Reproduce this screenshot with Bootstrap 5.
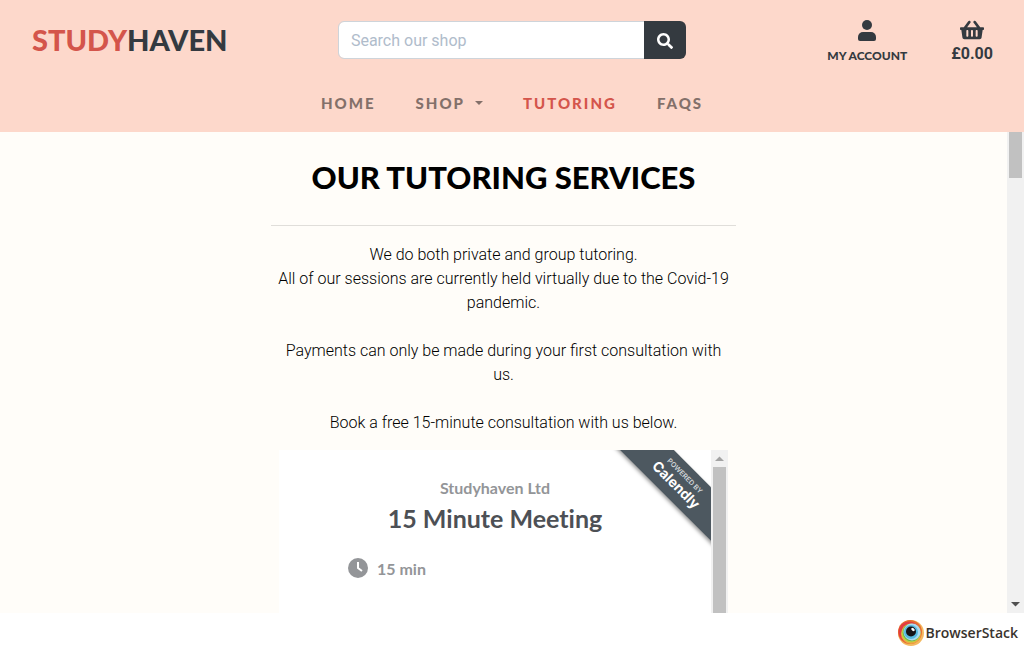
<!DOCTYPE html>
<html lang="en">
<head>
<meta charset="utf-8">
<meta name="viewport" content="width=device-width, initial-scale=1">
<title>Studyhaven - Tutoring</title>
<link href="https://cdn.jsdelivr.net/npm/bootstrap@5.3.0/dist/css/bootstrap.min.css" rel="stylesheet">
<style>
  :root { --peach: #fdd8cb; --ink: #343a40; --coral: #d4554b; --cream: #fffdf9; }
  body { font-family: Roboto, "Liberation Sans", sans-serif; font-weight: 300; color: #000; background: #fff; }
  .display-face { font-family: Lato, "Liberation Sans", sans-serif; text-transform: uppercase; }
  .site-header { background: var(--peach); }
  .header-top { padding-top: 20px; }
  .header-side { flex: 0 0 33%; }
  .header-search { flex: 0 0 34%; width: 34%; padding-top: 1px; }
  .brand { font-size: 29px; font-weight: 900; line-height: 40px; color: var(--ink); }
  .brand span, .site-nav a.active { color: var(--coral); }
  .search-box { color: #000; border-color: #ced4da; font-weight: 400; height: 38px; }
  .search-box::placeholder { color: #b0bccb; }
  .search-btn { background: var(--ink); color: #fff; width: 42px; padding: 0; border: 0; }
  .account-link { color: var(--ink); font-size: 12px; font-weight: 900; line-height: 16px; margin-right: 44px; }
  .account-link svg { margin-bottom: 7px; }
  .basket-link { color: var(--ink); font-size: 16px; font-weight: 700; line-height: 26px; margin-right: 31px; }
  .basket-link svg { margin-top: -1px; }
  .site-nav { gap: 40px; padding: 24px 0 17px; font-size: 15px; font-weight: 900; letter-spacing: 2px; line-height: 24px; }
  .site-nav a { color: #83706a; }
  .site-nav .dropdown-toggle::after { margin-left: 10px; vertical-align: 4px; }
  .page-body { background: var(--cream); min-height: 0; }
  .page-column { max-width: 465px; }
  .page-title { font-size: 31px; font-weight: 900; line-height: 42px; margin-bottom: 27px; }
  .page-column hr { color: #000; opacity: .12; margin: 0 0 17px; }
  .page-column p { margin-bottom: 15px; }
  .bar { width: 17px; background: #f1f1f1; flex: none; }
  .thumb { width: 13px; background: #c1c1c1; }
  .page-bar .thumb { height: 46px; }
  .booking { background: #fff; font-family: Lato, "Liberation Sans", sans-serif; height: 600px; font-variant-ligatures: none; }
  .booking-host { font-size: 16px; line-height: 20px; font-weight: 700; color: #939598; }
  .booking-title { font-size: 25px; line-height: 32px; font-weight: 700; color: #4d5055; }
  .ribbon-clip { position: absolute; top: 0; right: 0; width: 110px; height: 110px; overflow: hidden; }
  .ribbon { position: absolute; top: 13px; right: -58px; width: 180px; height: 38px; transform: rotate(45deg);
    background: #4d5860; color: #fff; box-shadow: 0 2px 4px rgba(0,0,0,.4); font-family: Inter, sans-serif; }
  .ribbon small { font-size: 7px; line-height: 8px; color: #d0d4d7; font-weight: 600; }
  .ribbon strong { font-size: 14px; line-height: 16px; font-weight: 700; }
  .stack-bar { padding: 6px; }
  .stack-bar svg { margin-right: 2px; }
  .stack-name { font-family: "Open Sans", sans-serif; font-size: 14px; font-weight: 600; line-height: 27px; color: #39332d; }
</style>
</head>
<body class="vh-100 d-flex flex-column overflow-hidden">
<header class="site-header">
  <div class="header-top d-flex align-items-start">
    <div class="header-side px-4">
      <a href="#" class="brand display-face text-decoration-none d-inline-block ms-2"><span>Study</span>haven</a>
    </div>
    <form class="header-search input-group">
      <input type="search" class="form-control search-box" placeholder="Search our shop" aria-label="Search our shop">
      <button type="button" class="btn search-btn" aria-label="Search">
        <svg width="16" height="16" viewBox="0 0 512 512" fill="currentColor"><path d="M505 442.700 405.300 343c-4.500-4.500-10.600-7-17-7H372c27.600-35.300 44-79.700 44-128C416 93.100 322.900 0 208 0S0 93.100 0 208s93.100 208 208 208c48.300 0 92.700-16.400 128-44v16.300c0 6.400 2.500 12.500 7 17l99.700 99.700c9.400 9.400 24.600 9.400 33.900 0l28.300-28.300c9.400-9.400 9.400-24.600.1-34zM208 336c-70.700 0-128-57.200-128-128 0-70.700 57.200-128 128-128 70.700 0 128 57.200 128 128 0 70.700-57.200 128-128 128z"/></svg>
      </button>
    </form>
    <div class="header-side d-flex justify-content-end text-center">
      <a href="#" class="account-link display-face text-decoration-none">
        <svg class="d-block mx-auto" width="18" height="21" viewBox="0 0 18 21" fill="currentColor"><circle cx="9" cy="5" r="5"/><path d="M5 12h8a5 5 0 0 1 5 5v2q0 2-2 2H2q-2 0-2-2v-2a5 5 0 0 1 5-5z"/></svg>
        My Account
      </a>
      <a href="#" class="basket-link text-decoration-none">
        <svg class="d-block mx-auto" width="24" height="22" viewBox="0 0 576 512" fill="currentColor"><path d="M576 216v16c0 13.300-10.700 24-24 24h-8l-26.100 182.800C514.500 462.400 494.300 480 470.400 480H105.600c-23.900 0-44.100-17.600-47.500-41.200L32 256h-8c-13.300 0-24-10.700-24-24v-16c0-13.300 10.700-24 24-24h67.300l106.800-146.800c10.400-14.300 30.400-17.500 44.700-7.100 14.300 10.400 17.500 30.400 7.100 44.700L170.500 192h235.100L326.100 82.800c-10.400-14.300-7.200-34.300 7.100-44.700 14.300-10.400 34.300-7.200 44.700 7.100L484.700 192H552c13.300 0 24 10.700 24 24zM312 392V280c0-13.300-10.700-24-24-24s-24 10.700-24 24v112c0 13.300 10.700 24 24 24s24-10.700 24-24zm112 0V280c0-13.300-10.700-24-24-24s-24 10.700-24 24v112c0 13.300 10.700 24 24 24s24-10.700 24-24zm-224 0V280c0-13.300-10.700-24-24-24s-24 10.700-24 24v112c0 13.300 10.700 24 24 24s24-10.700 24-24z"/></svg>
        £0.00
      </a>
    </div>
  </div>
  <nav class="site-nav display-face d-flex justify-content-center">
    <a href="#" class="text-decoration-none">Home</a>
    <a href="#" class="text-decoration-none dropdown-toggle">Shop</a>
    <a href="#" class="text-decoration-none active" aria-current="page">Tutoring</a>
    <a href="#" class="text-decoration-none">FAQs</a>
  </nav>
</header>

<div class="page-body d-flex flex-grow-1">
  <main class="flex-grow-1 overflow-hidden">
    <div class="page-column mx-auto text-center pt-4">
      <h1 class="page-title display-face">Our Tutoring Services</h1>
      <hr>
      <p>We do both private and group tutoring.<br>
        All of our sessions are currently held virtually due to the Covid-19<br>pandemic.<br><br>
        Payments can only be made during your first consultation with<br>us.<br><br>
        Book a free 15-minute consultation with us below.</p>
      <section class="booking d-flex mx-2">
        <div class="flex-grow-1 position-relative pt-4">
          <div class="booking-host mt-1">Studyhaven Ltd</div>
          <h2 class="booking-title mt-1 mb-4">15 Minute Meeting</h2>
          <div class="booking-host d-flex align-items-center ms-5 ps-3">
            <svg class="ms-1 me-2" width="22" height="22" viewBox="0 0 22 22"><circle cx="11" cy="10" r="10" fill="#939598"/><path d="M11 4v6l4 3" fill="none" stroke="#fff" stroke-width="2"/></svg>
            15 min
          </div>
          <div class="ribbon-clip"><div class="ribbon d-flex flex-column justify-content-center align-items-center"><small>POWERED BY</small><strong>Calendly</strong></div></div>
        </div>
        <div class="bar d-flex flex-column align-items-center">
          <svg width="17" height="17" viewBox="0 0 17 17" fill="#a3a3a3"><path d="M4 11h9L8.500 6.500z"/></svg>
          <div class="thumb flex-grow-1"></div>
        </div>
      </section>
    </div>
  </main>
  <div class="bar page-bar d-flex flex-column align-items-center justify-content-between">
    <div class="thumb"></div>
    <svg width="17" height="17" viewBox="0 0 17 17" fill="#505050"><path d="M4 6h9l-4.500 4.500z"/></svg>
  </div>
</div>

<footer class="stack-bar d-flex justify-content-end align-items-center">
  <svg width="26" height="26" viewBox="0 0 26 26"><circle cx="13" cy="13" r="13" fill="#f4b960"/><circle cx="12" cy="12" r="12" fill="#e66f32"/><circle cx="11" cy="12" r="10.500" fill="#e43c41"/><circle cx="13" cy="14" r="10" fill="#f0a640"/><circle cx="13" cy="13" r="9.500" fill="#bdd041"/><circle cx="13.500" cy="12.500" r="8.800" fill="#6db54c"/><circle cx="14" cy="12" r="8.500" fill="#aedaf0"/><circle cx="13" cy="12" r="7" fill="#56b8de"/><circle cx="13" cy="11.500" r="5" fill="#161316"/><ellipse cx="15" cy="9.500" rx="2" ry="1.300" fill="#fff" transform="rotate(40 15 9.500)"/></svg>
  <span class="stack-name">BrowserStack</span>
</footer>
<script src="https://cdn.jsdelivr.net/npm/bootstrap@5.3.0/dist/js/bootstrap.bundle.min.js"></script>
</body>
</html>
